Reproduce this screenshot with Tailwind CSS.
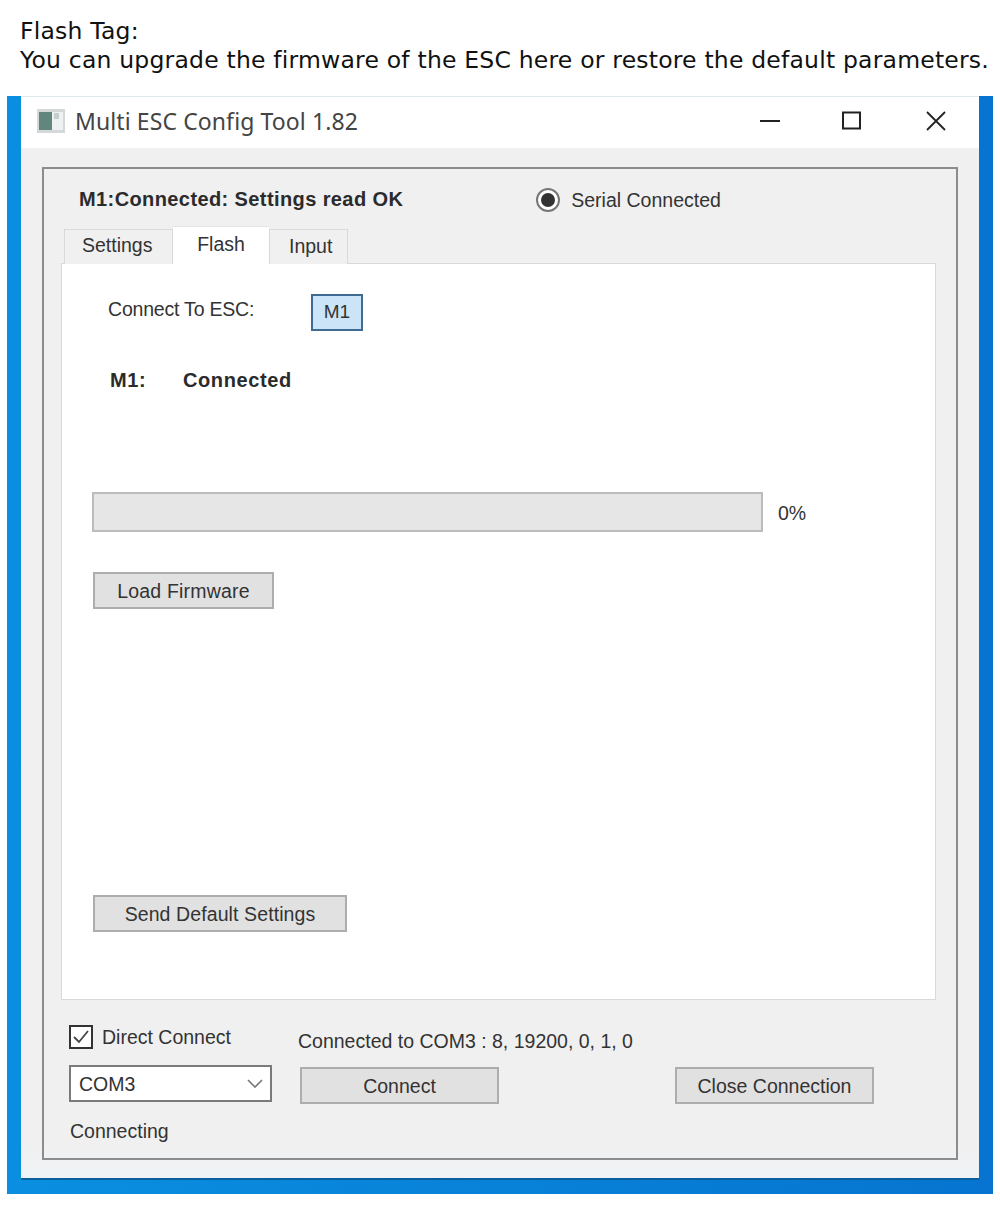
<!DOCTYPE html>
<html>
<head>
<meta charset="utf-8">
<script src="https://cdn.jsdelivr.net/npm/@tailwindcss/browser@4"></script>
</head>
<body class="bg-white">
<div class="w-[1000px] h-[1214px] bg-white overflow-hidden font-['Liberation_Sans',Arial,sans-serif] text-[19.5px] text-[#333]">
  <div class="pt-[17px] pl-[20px] h-[96px] font-['DejaVu_Sans',Verdana,sans-serif] text-[23.5px] leading-[29px] text-[#111] whitespace-nowrap">
    <p class="tracking-[0.2px]">Flash Tag:</p>
    <p class="tracking-[0.2px]">You can upgrade the firmware of the ESC here or restore the default parameters.</p>
  </div>
  <div class="ml-[7px] w-[986px] h-[1098px] bg-[linear-gradient(90deg,#0a8fe0,#0674d0)] pl-[14px] pr-[14px] pb-[14px] flex flex-col">
    <div class="h-[52px] shrink-0 bg-white border-t border-[#dfe8ec] flex items-center pl-[16px] pb-[3px]">
      <svg class="w-[28px] h-[24px] shrink-0" viewBox="0 0 28 24"><rect x="0" y="0" width="28" height="24" fill="#d4d8d8"/><rect x="2" y="3" width="24" height="18" fill="#eef1f1"/><rect x="2" y="3" width="13" height="18" fill="#62867e"/><rect x="17" y="4" width="5" height="6" fill="#c4cfcd"/></svg>
      <span class="ml-[10px] font-['Noto_Sans',sans-serif] text-[23px] text-[#444] tracking-[0.1px] whitespace-nowrap">Multi ESC Config Tool 1.82</span>
      <div class="ml-auto flex items-center pr-[32px]">
        <svg class="w-[20px] h-[20px]" viewBox="0 0 20 20"><path d="M0 10H20" stroke="#222" stroke-width="2"/></svg>
        <svg class="w-[20px] h-[20px] ml-[62px]" viewBox="0 0 20 20"><rect x="1" y="1.5" width="17" height="16" fill="none" stroke="#222" stroke-width="2"/></svg>
        <svg class="w-[22px] h-[22px] ml-[63px]" viewBox="0 0 22 22"><path d="M2 2L20 20M20 2L2 20" stroke="#222" stroke-width="1.8"/></svg>
      </div>
    </div>
    <div class="flex-1 bg-[linear-gradient(180deg,#f0f0f0_0%,#f0f0f0_97%,#eff3f7_100%)] border-b-2 border-[#0b5f9c] pt-[19px] px-[21px] pb-[18px] flex">
      <div class="flex-1 border-2 border-[#8c8c8c] flex flex-col pl-[17px] pr-[20px]">
        <div class="h-[57px] shrink-0 flex items-start pt-[18px] relative">
          <b class="ml-[18px] text-[20px] tracking-[0.4px] text-[#2b2b2b] leading-[24px] whitespace-nowrap">M1:Connected: Settings read OK</b>
          <div class="ml-[133px] flex items-center h-[26px] whitespace-nowrap">
            <span class="w-[24px] h-[24px] rounded-full border-2 border-[#777] bg-white flex items-center justify-center"><span class="w-[14px] h-[14px] rounded-full bg-[#333]"></span></span>
            <span class="ml-[11px] pt-[2px]">Serial Connected</span>
          </div>
        </div>
        <div class="flex items-end h-[38px] shrink-0 pl-[3px] relative z-10 -mb-px">
          <div class="w-[109px] h-[35px] bg-[#f0f0f0] border border-b-0 border-[#d9d9d9] flex items-center pl-[17px] pb-[2px]">Settings</div>
          <div class="w-[96px] h-[38px] bg-white border-t border-[#e4e4e4] flex items-start pt-[3px] justify-center">Flash</div>
          <div class="w-[79px] h-[35px] bg-[#f0f0f0] border border-b-0 border-[#d9d9d9] flex items-center pl-[19px] pb-[1px]">Input</div>
        </div>
        <div class="h-[737px] shrink-0 bg-white border border-[#d9d9d9] pl-[30px] flex flex-col">
          <div class="flex items-start pt-[30px] h-[67px] shrink-0">
            <span class="ml-[16px] leading-[30px] tracking-[-0.2px] whitespace-nowrap w-[203px]">Connect To ESC:</span>
            <span class="w-[52px] h-[37px] bg-[#cce4f7] border-2 border-[#3f6b92] flex items-center justify-center text-[19px]">M1</span>
          </div>
          <div class="flex mt-[35px] font-bold text-[20px] tracking-[0.6px] text-[#2b2b2b] leading-[28px] h-[28px] shrink-0">
            <span class="ml-[18px] w-[73px]">M1:</span><span>Connected</span>
          </div>
          <div class="flex items-center mt-[98px] shrink-0">
            <div class="w-[671px] h-[40px] bg-[#e6e6e6] border-2 border-[#bcbcbc]"></div>
            <span class="ml-[15px] pt-[4px]">0%</span>
          </div>
          <button class="mt-[40px] ml-[1px] w-[181px] h-[37px] shrink-0 pt-[3px] bg-[#e1e1e1] border-2 border-[#adadad] text-[#333] tracking-[0.2px]">Load Firmware</button>
          <button class="mt-[286px] ml-[1px] w-[254px] h-[37px] shrink-0 pt-[3px] bg-[#e1e1e1] border-2 border-[#adadad] text-[#333] tracking-[0.1px]">Send Default Settings</button>
        </div>
        <div class="flex-1 flex pl-[8px] pt-[25px]">
          <div class="w-[203px] shrink-0 flex flex-col">
            <div class="flex items-center h-[24px]">
              <svg class="w-[24px] h-[24px] shrink-0" viewBox="0 0 24 24"><rect x="1" y="1" width="22" height="22" fill="#fff" stroke="#333" stroke-width="2"/><path d="M5 12L10 17L19 6" fill="none" stroke="#444" stroke-width="1.8"/></svg>
              <span class="ml-[9px] pt-[2px] whitespace-nowrap">Direct Connect</span>
            </div>
            <div class="mt-[16px] h-[37px] bg-white border-2 border-[#7a7a7a] flex items-center pl-[8px] pr-[6px] justify-between">
              <span class="pt-[2px]">COM3</span>
              <svg class="w-[18px] h-[12px]" viewBox="0 0 18 12"><path d="M2 2L9 9L16 2" fill="none" stroke="#777" stroke-width="1.6"/></svg>
            </div>
            <div class="mt-[17px] ml-[1px] leading-[24px] whitespace-nowrap">Connecting</div>
          </div>
          <div class="ml-[26px] flex flex-col">
            <div class="mt-[4px] h-[24px] leading-[24px] whitespace-nowrap">Connected to COM3 : 8, 19200, 0, 1, 0</div>
            <div class="mt-[14px] flex">
              <button class="ml-[2px] w-[199px] h-[37px] pt-[2px] bg-[#e1e1e1] border-2 border-[#adadad] text-[#333]">Connect</button>
              <button class="ml-[176px] w-[199px] h-[37px] pt-[2px] bg-[#e1e1e1] border-2 border-[#adadad] text-[#333]">Close Connection</button>
            </div>
          </div>
        </div>
      </div>
    </div>
  </div>
</div>
</body>
</html>
